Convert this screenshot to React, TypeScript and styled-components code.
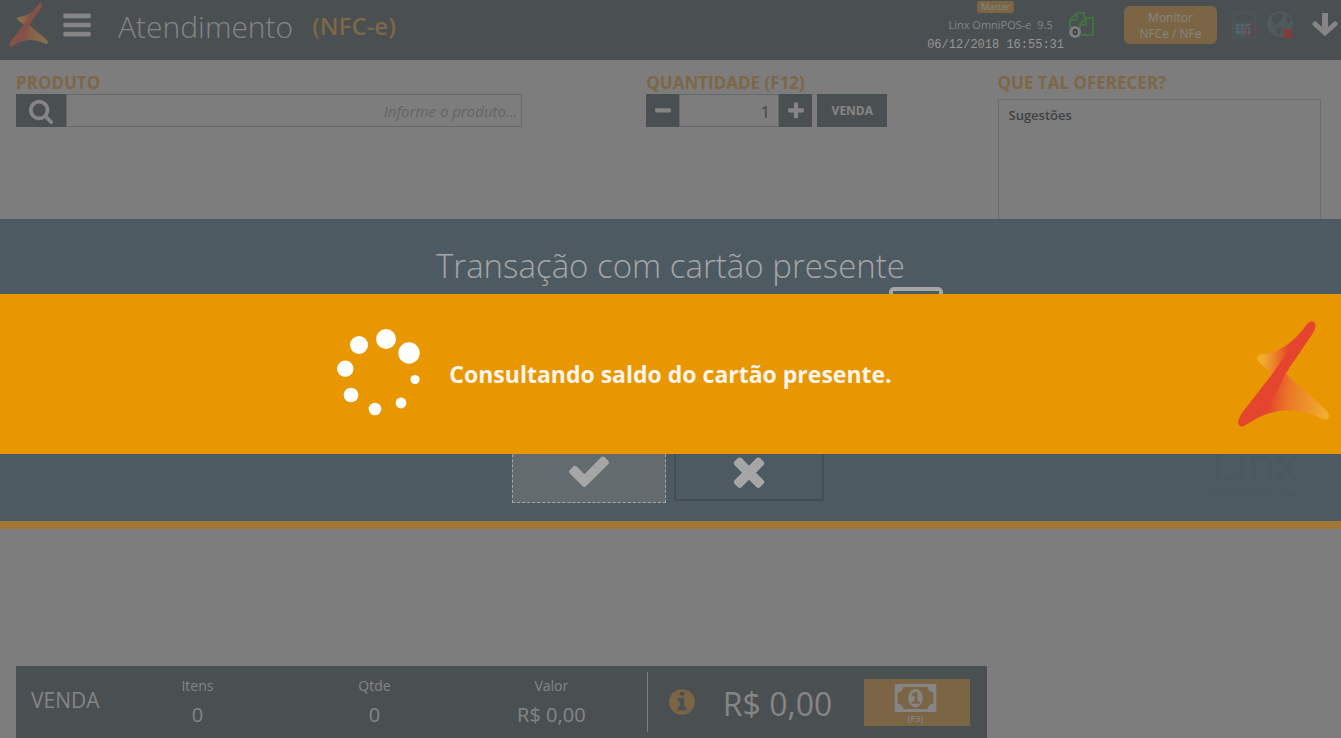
import React from 'react';
import styled, { createGlobalStyle } from 'styled-components';

const sans = '"Open Sans", "Noto Sans", sans-serif';

const color = {
  page: '#7d7d7d',
  slate: '#4a5052',
  light: '#858585',
  amber: '#7e6746',
  amberFill: '#7c6544',
  line: '#686868',
  band: '#4d5a62',
  bandText: '#a6a6a6',
  bandEdge: '#a07638',
  orange: '#e99700',
};

const GlobalStyle = createGlobalStyle`
  *, *::before, *::after { box-sizing: border-box; }
  html, body { margin: 0; background: ${color.page}; }
  body { font-family: ${sans}; overflow: hidden; }
  button, input { font-family: inherit; margin: 0; border-radius: 0; }
  h1, h2, p, dl, dt, dd { margin: 0; font-weight: 400; }
`;

const paths = {
  check:
    'M1671 566q0 40-28 68l-724 724-136 136q-28 28-68 28t-68-28l-136-136-362-362q-28-28-28-68t28-68l136-136q28-28 68-28t68 28l294 295 656-657q28-28 68-28t68 28l136 136q28 28 28 68z',
  times:
    'M1490 1322q0 40-28 68l-136 136q-28 28-68 28t-68-28l-294-294-294 294q-28 28-68 28t-68-28l-136-136q-28-28-28-68t28-68l294-294-294-294q-28-28-28-68t28-68l136-136q28-28 68-28t68 28l294 294 294-294q28-28 68-28t68 28l136 136q28 28 28 68t-28 68l-294 294 294 294q28 28 28 68z',
  search:
    'M1216 832q0-185-131.500-316.500t-316.500-131.500-316.500 131.500-131.500 316.500 131.500 316.500 316.500 131.500 316.500-131.500 131.500-316.500zm512 832q0 52-38 90t-90 38q-54 0-90-38l-343-342q-179 124-399 124-143 0-273.500-55.500t-225-150-150-225-55.500-273.500 55.500-273.500 150-225 225-150 273.500-55.500 273.500 55.500 225 150 150 225 55.500 273.500q0 220-124 399l343 343q37 37 37 90z',
  plus:
    'M1600 736v192q0 40-28 68t-68 28h-416v416q0 40-28 68t-68 28h-192q-40 0-68-28t-28-68v-416h-416q-40 0-68-28t-28-68v-192q0-40 28-68t68-28h416v-416q0-40 28-68t68-28h192q40 0 68 28t28 68v416h416q40 0 68 28t28 68z',
  minus:
    'M1600 736v192q0 40-28 68t-68 28h-1216q-40 0-68-28t-28-68v-192q0-40 28-68t68-28h1216q40 0 68 28t28 68z',
  bars:
    'M1664 1344v128q0 26-19 45t-45 19h-1408q-26 0-45-19t-19-45v-128q0-26 19-45t45-19h1408q26 0 45 19t19 45zm0-512v128q0 26-19 45t-45 19h-1408q-26 0-45-19t-19-45v-128q0-26 19-45t45-19h1408q26 0 45 19t19 45zm0-512v128q0 26-19 45t-45 19h-1408q-26 0-45-19t-19-45v-128q0-26 19-45t45-19h1408q26 0 45 19t19 45z',
  info:
    'M1152 1376v-160q0-14-9-23t-23-9h-96v-512q0-14-9-23t-23-9h-320q-14 0-23 9t-9 23v160q0 14 9 23t23 9h96v320h-96q-14 0-23 9t-9 23v160q0 14 9 23t23 9h448q14 0 23-9t9-23zm-128-896v-160q0-14-9-23t-23-9h-192q-14 0-23 9t-9 23v160q0 14 9 23t23 9h192q14 0 23-9t9-23zm640 416q0 209-103 385.500t-279.500 279.500-385.500 103-385.500-103-279.500-279.500-103-385.500 103-385.500 279.500-279.500 385.500-103 385.500 103 279.500 279.500 103 385.500z',
};

function Glyph({ name, size }: { name: keyof typeof paths; size: number }) {
  return (
    <svg width={size} height={size} viewBox="0 0 1792 1792" fill="currentColor" aria-hidden="true">
      <path d={paths[name]} />
    </svg>
  );
}

interface LogoProps {
  id: string;
  width: number;
  height: number;
  red: string;
  mid: string;
  edge: string;
}

function StarLogo({ id, width, height, red, mid, edge }: LogoProps) {
  return (
    <svg width={width} height={height} viewBox="0 0 274 318" preserveAspectRatio="none" aria-hidden="true">
      <defs>
        <linearGradient id={`${id}-low`} gradientUnits="userSpaceOnUse" x1="95" y1="220" x2="270" y2="240">
          <stop offset="0" stopColor={red} />
          <stop offset="0.35" stopColor={mid} />
          <stop offset="1" stopColor={edge} />
        </linearGradient>
        <linearGradient id={`${id}-up`} gradientUnits="userSpaceOnUse" x1="150" y1="110" x2="75" y2="105">
          <stop offset="0" stopColor={red} />
          <stop offset="0.45" stopColor={mid} />
          <stop offset="1" stopColor={edge} />
        </linearGradient>
      </defs>
      <path d="M58 108Q63 99 80 99Q140 92 195 27L150 150L104 158L66 126Q54 116 58 108Z" fill={`url(#${id}-up)`} />
      <path
        d="M104 158L144 156Q150 165 190 200L262 264Q277 279 273 290Q267 300 250 292Q200 268 146 268Q90 270 30 307Z"
        fill={`url(#${id}-low)`}
      />
      <path
        d="M207 10Q222 -6 232 6Q237 18 224 39L144 156Q135 180 118 210Q90 260 50 296L21 313Q8 322 1 309Q-2 297 12 276L104 158L170 62Z"
        fill={red}
      />
    </svg>
  );
}

function FilesIcon() {
  return (
    <svg width="26" height="26" viewBox="0 0 26 26" fill="none" stroke="#417043" strokeWidth="2" aria-hidden="true">
      <path d="M1 15V8L8 1H15V6M1 8H8V1M1 15H3M12 23H24V6H17L11 12V17M11 13H17V6" />
    </svg>
  );
}

function TerminalIcon() {
  return (
    <svg width="24" height="28" viewBox="0 0 24 28" aria-hidden="true">
      <path fillRule="evenodd" d="M0 0H24V28H0ZM3 3V10H19V3Z" fill="#4b5559" />
      <path d="M21 1V27" stroke="#464d50" />
      <path d="M4 13H18V23H4Z" fill="#56646c" />
      <path d="M4 16H18M4 19H18M8 13V23M13 13V23" stroke="#4b5559" />
      <path d="M15.500 15.500H22.500V24.500H15.500Z" fill="none" stroke="#7c3c3c" />
    </svg>
  );
}

function GlobeIcon() {
  return (
    <svg width="28" height="28" viewBox="0 0 28 28" aria-hidden="true">
      <circle cx="13" cy="13" r="13" fill="#4f595e" />
      <path d="M5 6L9 3L14 2L17 5L14 8L15 10L11 12L8 14L5 10ZM19 6L22 5L24 9L22 12L19 10ZM11 16L15 17L14 22L11 24L9 19Z" fill="#485053" />
      <path d="M17 18L20 18L21 20L23 18H26V20L24 22.500L26 25V27H23L21 25L19 27H16V25L18 22.500L16 20Z" fill="#843a3b" />
    </svg>
  );
}

function ArrowDownIcon() {
  return (
    <svg width="26" height="26" viewBox="0 0 26 26" fill="none" stroke="currentColor" aria-hidden="true">
      <path d="M13 1V19" strokeWidth="6" />
      <path d="M3 12L13 21L23 12" strokeWidth="5" strokeLinecap="round" strokeLinejoin="miter" />
    </svg>
  );
}

function MoneyIcon() {
  return (
    <svg width="43" height="29" viewBox="0 0 43 29" aria-hidden="true">
      <path
        fillRule="evenodd"
        fill="currentColor"
        d="M1 0H42Q43 0 43 1V28Q43 29 42 29H1Q0 29 0 28V1Q0 0 1 0ZM9 3Q8 8 3 9V20Q8 21 9 26H34Q35 21 40 20V9Q35 8 34 3Z"
      />
      <ellipse cx="21.500" cy="14.500" rx="7.500" ry="9.500" fill="currentColor" />
      <path d="M18 10L21 8H23.500V18H26V20.500H17.500V18H20.500V12L18 13Z" fill={color.amberFill} />
    </svg>
  );
}

function CardIcon() {
  return (
    <svg width="54" height="90" viewBox="0 0 54 90" fill="none" stroke={color.bandText} strokeWidth="4" aria-hidden="true">
      <rect x="2" y="2" width="50" height="86" rx="3" />
    </svg>
  );
}

const dots = [
  [22, 16, 9],
  [49, 10, 10],
  [72, 24, 10.7],
  [78, 50.5, 4.6],
  [64, 74, 5.4],
  [38, 80, 6.3],
  [14, 66, 7.3],
  [8.3, 39.7, 8.2],
];

function Spinner() {
  return (
    <svg width="84" height="90" viewBox="0 0 84 90" fill="#fff" role="img" aria-label="Carregando">
      {dots.map(([x, y, r]) => (
        <circle key={`${x}-${y}`} cx={x} cy={y} r={r} />
      ))}
    </svg>
  );
}

const Page = styled.div`
  min-height: 100vh;
  display: flex;
  flex-direction: column;
`;

const Header = styled.header`
  height: 60px;
  padding: 0 3px 0 9px;
  display: flex;
  align-items: flex-start;
  background: ${color.slate};
  color: ${color.light};
`;

const HeaderLogo = styled.div`
  padding-top: 3px;
  width: 39px;
  display: flex;
`;

const IconButton = styled.button<{ $top: number; $left: number }>`
  display: flex;
  padding: 0;
  margin: ${(p) => p.$top}px 0 0 ${(p) => p.$left}px;
  border: 0;
  background: none;
  color: ${color.light};
`;

const PageTitle = styled.h1`
  margin-left: 25px;
  font-size: 30px;
  line-height: 54px;
  && { font-weight: 300; }
`;

const DocType = styled.span`
  margin-left: 19px;
  font-size: 24px;
  line-height: 52px;
  font-weight: 600;
  color: ${color.amber};
`;

const HeaderEnd = styled.div`
  margin-left: auto;
  display: flex;
  align-items: flex-start;
`;

const Version = styled.div`
  display: flex;
  flex-direction: column;
  align-items: center;
  padding-top: 1px;
  font-size: 12px;
`;

const MasterBadge = styled.span`
  padding: 0 4px;
  border-radius: 3px;
  background: ${color.amberFill};
  font-size: 9px;
  line-height: 12px;
`;

const VersionName = styled.span`
  padding-left: 10px;
  font-size: 11px;
  line-height: 24px;
  white-space: pre;
`;

const Clock = styled.time`
  font-family: "Liberation Mono", monospace;
  line-height: 16px;
  color: #969696;
`;

const FilesButton = styled.button`
  position: relative;
  display: flex;
  margin: 12px 0 0 5px;
  padding: 0;
  border: 0;
  background: none;
`;

const Count = styled.span`
  position: absolute;
  left: 0;
  bottom: 0;
  width: 12px;
  height: 12px;
  border-radius: 50%;
  background: #7b7d7d;
  color: #2c2c2c;
  font-size: 9px;
  font-weight: 700;
  line-height: 12px;
  text-align: center;
`;

const MonitorButton = styled.button`
  width: 93px;
  height: 38px;
  margin: 6px 0 0 29px;
  padding: 2px 0 0;
  border: 0;
  background: ${color.amberFill};
  color: ${color.light};
  font-size: 12px;
  line-height: 16px;
  && { border-radius: 6px; }
`;

const Content = styled.main`
  flex: 1;
  display: grid;
  grid-template-columns: 3fr minmax(0, 1fr);
  column-gap: 11px;
  padding: 12px 20px 0 16px;
`;

const Workspace = styled.div`
  display: flex;
  flex-direction: column;
  justify-content: space-between;
`;

const Fields = styled.div`
  display: grid;
  grid-template-columns: minmax(0, 63fr) minmax(0, 34fr);
`;

const ProductField = styled.div`
  padding-right: 124px;
`;

const QuantityField = styled.div``;

const Caption = styled.label`
  display: block;
  font-size: 17px;
  line-height: 22px;
  font-weight: 700;
  color: ${color.amber};
  white-space: nowrap;
`;

const Group = styled.div`
  display: flex;
  height: 33px;
`;

const SquareButton = styled.button<{ $width: number }>`
  flex: none;
  width: ${(p) => p.$width}px;
  padding: 0;
  border: 0;
  display: flex;
  align-items: center;
  justify-content: center;
  background: ${color.slate};
  color: ${color.light};
  font-size: 12px;
  font-weight: 700;
`;

const SaleButton = styled(SquareButton)`
  margin-left: 5px;
`;

const TextInput = styled.input<{ $width?: number }>`
  ${(p) => (p.$width ? `width: ${p.$width}px;` : 'flex: 1; min-width: 0;')}
  padding: 0 4px;
  border: 1px solid ${color.line};
  background: transparent;
  color: #4f4538;
  font-size: 15px;
  text-align: right;
  &::placeholder {
    color: #646464;
    font-style: italic;
    opacity: 1;
  }
`;

const QuantityInput = styled(TextInput)`
  padding: 2px 8px 0;
  font-size: 17px;
`;

const Offers = styled.aside`
  h2 {
    font-size: 17px;
    line-height: 22px;
    font-weight: 700;
    color: ${color.amber};
  }
`;

const OfferPanel = styled.section`
  margin-top: 5px;
  height: 400px;
  padding: 5px 10px;
  border: 1px solid #6c6c6c;
  color: #404244;
  font-size: 13px;
  line-height: 20px;
  font-weight: 600;
`;

const Totals = styled.footer`
  height: 72px;
  display: grid;
  grid-template-columns: 65% 35%;
  align-items: center;
  background: ${color.slate};
  color: ${color.light};
`;

const Summary = styled.div`
  display: flex;
  align-items: center;
  padding: 0 7px 2px 15px;
`;

const SummaryTitle = styled.span`
  width: 78px;
  padding-bottom: 2px;
  font-size: 21px;
  line-height: 28px;
`;

const SummaryList = styled.dl`
  flex: 1;
  display: grid;
  grid-template-columns: repeat(3, 1fr);
  text-align: center;
  dt { font-size: 14px; line-height: 28px; }
  dd { font-size: 20px; line-height: 30px; }
`;

const Payment = styled.div`
  height: 60px;
  display: flex;
  align-items: center;
  padding: 0 16px 0 19px;
  border-left: 1px solid #7d7d7d;
`;

const InfoMark = styled.span`
  display: flex;
  color: ${color.amberFill};
`;

const Amount = styled.strong`
  margin-left: 26px;
  padding-top: 3px;
  font-size: 32px;
  line-height: 40px;
  font-weight: 400;
`;

const PayButton = styled.button`
  margin-left: auto;
  width: 106px;
  height: 47px;
  padding: 5px 4px 0 0;
  border: 0;
  display: flex;
  flex-direction: column;
  align-items: center;
  background: ${color.amberFill};
  color: ${color.light};
  font-size: 9px;
  font-weight: 600;
  line-height: 14px;
`;

const Layer = styled.div`
  position: fixed;
  inset: 10px 0 0;
  display: flex;
  align-items: center;
`;

const Dialog = styled.section`
  position: relative;
  width: 100%;
  height: 310px;
  padding: 20px 0 18px;
  display: flex;
  flex-direction: column;
  align-items: center;
  justify-content: space-between;
  background: ${color.band};
  border-bottom: 8px solid ${color.bandEdge};
  color: ${color.bandText};
  h2 {
    font-size: 33px;
    line-height: 54px;
    font-weight: 300;
  }
`;

const CardSlot = styled.div`
  position: absolute;
  top: 68px;
  left: calc(50% + 218px);
  display: flex;
`;

const Actions = styled.div`
  display: flex;
  align-items: center;
  gap: 8px;
  padding-right: 6px;
`;

const DialogButton = styled.button<{ $active?: boolean }>`
  width: ${(p) => (p.$active ? 154 : 150)}px;
  height: ${(p) => (p.$active ? 64 : 60)}px;
  padding: 0;
  display: flex;
  align-items: center;
  justify-content: center;
  border: ${(p) => (p.$active ? `1px dashed ${color.bandText}` : '2px solid #434f55')};
  background: ${(p) => (p.$active ? '#636b6e' : 'transparent')};
  color: ${color.bandText};
`;

const Watermark = styled.div`
  position: absolute;
  right: 42px;
  bottom: 20px;
  width: 88px;
  display: flex;
  flex-direction: column;
  align-items: center;
  color: #4a585f;
`;

const WatermarkName = styled.span`
  font-family: Lato, sans-serif;
  font-size: 48px;
  line-height: 52px;
`;

const WatermarkTag = styled.span`
  font-size: 6px;
  line-height: 12px;
  white-space: nowrap;
`;

const Loader = styled.section`
  width: 100%;
  height: 160px;
  display: grid;
  grid-template-columns: 1fr auto 1fr;
  align-items: center;
  column-gap: 28px;
  padding: 0 12px;
  background: ${color.orange};
`;

const LoaderSide = styled.div`
  display: flex;
  justify-content: flex-end;
`;

const LoaderText = styled.p`
  && { font-weight: 700; }
  font-size: 23px;
  line-height: 32px;
  color: #fdf5ee;
`;

export default function App() {
  return (
    <>
      <GlobalStyle />
      <Page>
        <Header>
          <HeaderLogo>
            <StarLogo id="head" width={39} height={44} red="#855048" mid="#86604a" edge="#8a7048" />
          </HeaderLogo>
          <IconButton $top={9} $left={13} aria-label="Menu">
            <Glyph name="bars" size={32} />
          </IconButton>
          <PageTitle>Atendimento</PageTitle>
          <DocType>(NFC-e)</DocType>
          <HeaderEnd>
            <Version>
              <MasterBadge>Master</MasterBadge>
              <VersionName>Linx OmniPOS-e  9.5</VersionName>
              <Clock>06/12/2018 16:55:31</Clock>
            </Version>
            <FilesButton aria-label="Documentos">
              <FilesIcon />
              <Count>0</Count>
            </FilesButton>
            <MonitorButton>
              Monitor
              <br />
              NFCe / NFe
            </MonitorButton>
            <IconButton $top={11} $left={15} aria-label="Terminal">
              <TerminalIcon />
            </IconButton>
            <IconButton $top={11} $left={11} aria-label="Rede">
              <GlobeIcon />
            </IconButton>
            <IconButton $top={12} $left={17} aria-label="Mais">
              <ArrowDownIcon />
            </IconButton>
          </HeaderEnd>
        </Header>

        <Content>
          <Workspace>
            <Fields>
              <ProductField>
                <Caption htmlFor="produto">PRODUTO</Caption>
                <Group>
                  <SquareButton $width={50} aria-label="Buscar">
                    <Glyph name="search" size={26} />
                  </SquareButton>
                  <TextInput id="produto" placeholder="Informe o produto..." />
                </Group>
              </ProductField>
              <QuantityField>
                <Caption htmlFor="quantidade">QUANTIDADE (F12)</Caption>
                <Group>
                  <SquareButton $width={33} aria-label="Diminuir">
                    <Glyph name="minus" size={20} />
                  </SquareButton>
                  <QuantityInput id="quantidade" $width={100} defaultValue="1" />
                  <SquareButton $width={33} aria-label="Aumentar">
                    <Glyph name="plus" size={20} />
                  </SquareButton>
                  <SaleButton $width={70}>VENDA</SaleButton>
                </Group>
              </QuantityField>
            </Fields>
            <Totals>
              <Summary>
                <SummaryTitle>VENDA</SummaryTitle>
                <SummaryList>
                  <div>
                    <dt>Itens</dt>
                    <dd>0</dd>
                  </div>
                  <div>
                    <dt>Qtde</dt>
                    <dd>0</dd>
                  </div>
                  <div>
                    <dt>Valor</dt>
                    <dd>R$ 0,00</dd>
                  </div>
                </SummaryList>
              </Summary>
              <Payment>
                <InfoMark>
                  <Glyph name="info" size={30} />
                </InfoMark>
                <Amount>R$ 0,00</Amount>
                <PayButton>
                  <MoneyIcon />
                  (F3)
                </PayButton>
              </Payment>
            </Totals>
          </Workspace>
          <Offers>
            <h2>QUE TAL OFERECER?</h2>
            <OfferPanel>Sugestões</OfferPanel>
          </Offers>
        </Content>
      </Page>

      <Layer>
        <Dialog role="dialog" aria-labelledby="dialog-title">
          <h2 id="dialog-title">Transação com cartão presente</h2>
          <CardSlot>
            <CardIcon />
          </CardSlot>
          <Actions>
            <DialogButton $active aria-label="Confirmar">
              <Glyph name="check" size={46} />
            </DialogButton>
            <DialogButton aria-label="Cancelar">
              <Glyph name="times" size={46} />
            </DialogButton>
          </Actions>
          <Watermark>
            <WatermarkName>Linx</WatermarkName>
            <WatermarkTag>SOFTWARE QUE MOVE O VAREJO</WatermarkTag>
          </Watermark>
        </Dialog>
      </Layer>

      <Layer>
        <Loader role="status">
          <LoaderSide>
            <Spinner />
          </LoaderSide>
          <LoaderText>Consultando saldo do cartão presente.</LoaderText>
          <LoaderSide>
            <StarLogo id="load" width={91} height={106} red="#e5452e" mid="#ea7a26" edge="#f0ae30" />
          </LoaderSide>
        </Loader>
      </Layer>
    </>
  );
}
